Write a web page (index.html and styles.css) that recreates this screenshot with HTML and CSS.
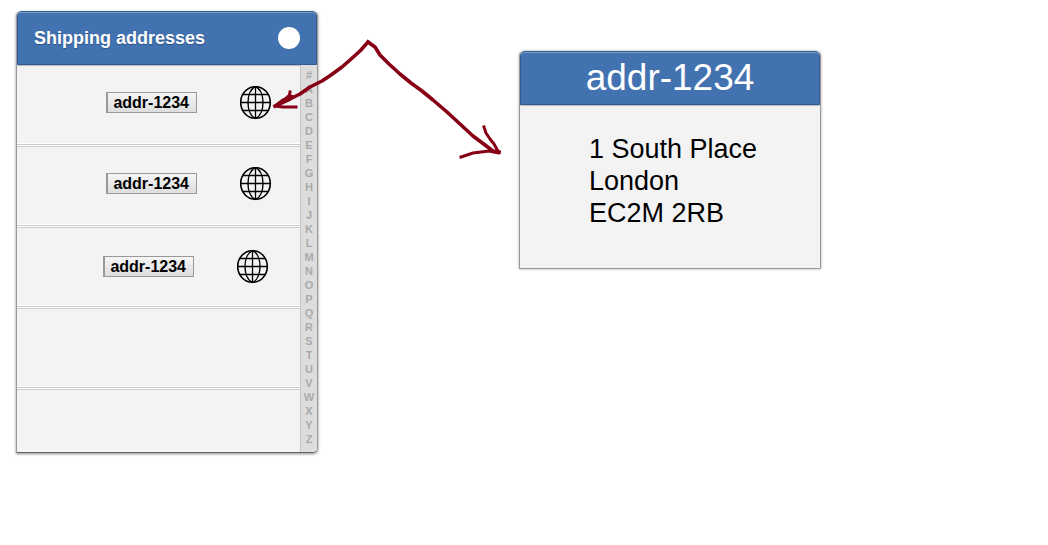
FILE: index.html
```html
<!DOCTYPE html>
<html lang="en">
<head>
<meta charset="utf-8">
<meta name="viewport" content="width=device-width, initial-scale=1">
<title>Shipping addresses</title>
<link rel="stylesheet" href="styles.css">
</head>
<body>
<svg class="defs" width="0" height="0" aria-hidden="true">
  <symbol id="globe" viewBox="0 0 32 34">
    <g fill="none" stroke="#000">
      <ellipse cx="15.5" cy="16.5" rx="14.8" ry="15.8" stroke-width="1.6"/>
      <path d="M15.5 .5C5.500 5 5.500 28 15.500 32.500M15.500 .5C25.500 5 25.500 28 15.500 32.500" stroke-width="1.400"/>
      <path d="M15.500 0V33M0 16.500H31M3 8.500H28M3 24.500H28" stroke-width="1.300"/>
    </g>
  </symbol>
</svg>
<main class="board">
  <section class="panel panel-list">
    <header class="panel-header">
      <h1 class="panel-title">Shipping addresses</h1>
      <button class="round-button" type="button" aria-label="Options"></button>
    </header>
    <div class="list-body">
      <ul class="rows">
        <li class="row"><button class="tag" type="button">addr-1234</button><button class="globe-button" type="button" aria-label="Show address"><svg class="globe"><use href="#globe"/></svg></button></li>
        <li class="row"><button class="tag" type="button">addr-1234</button><button class="globe-button" type="button" aria-label="Show address"><svg class="globe"><use href="#globe"/></svg></button></li>
        <li class="row row-inset"><button class="tag" type="button">addr-1234</button><button class="globe-button" type="button" aria-label="Show address"><svg class="globe"><use href="#globe"/></svg></button></li>
        <li class="row"></li>
        <li class="row row-last"></li>
      </ul>
      <nav class="index" aria-label="Alphabet">
        <a href="#">#</a><a href="#a">A</a><a href="#b">B</a><a href="#c">C</a><a href="#d">D</a><a href="#e">E</a><a href="#f">F</a><a href="#g">G</a><a href="#h">H</a><a href="#i">I</a><a href="#j">J</a><a href="#k">K</a><a href="#l">L</a><a href="#m">M</a><a href="#n">N</a><a href="#o">O</a><a href="#p">P</a><a href="#q">Q</a><a href="#r">R</a><a href="#s">S</a><a href="#t">T</a><a href="#u">U</a><a href="#v">V</a><a href="#w">W</a><a href="#x">X</a><a href="#y">Y</a><a href="#z">Z</a>
      </nav>
    </div>
  </section>
  <section class="panel panel-detail">
    <header class="panel-header panel-header-center">
      <h2 class="detail-title">addr-1234</h2>
    </header>
    <address class="address">1 South Place<br>London<br>EC2M 2RB</address>
  </section>
  <svg class="arrows" width="240" height="130" viewBox="265 35 240 130" aria-hidden="true">
    <g fill="none" stroke="#880015" stroke-width="3.6" stroke-linejoin="round" stroke-linecap="square">
      <path d="M368 42L360 51L350 60L342 67L331 75L322 81L310 87L300 94L290 99L275 106"/>
      <path d="M290 92L289 98L283 100L275 106L283 107L296 107" stroke-width="3"/>
      <path d="M281 102L289 95L295 97Z" fill="#880015" stroke-width="2"/>
      <path d="M368 42L375 47L380 55L389 64L400 74L411 83L422 91L433 100L447 112L460 124L473 136L485 145L493 151L499 152"/>
      <path d="M484 127L486 133L490 139L494 144L499 153L489 151L473 153L461 157" stroke-width="3"/>
    </g>
  </svg>
</main>
</body>
</html>
```
FILE: styles.css
```css
* {
  box-sizing: border-box;
}

body {
  margin: 0;
  background: #fff;
  font-family: "Liberation Sans", Arial, sans-serif;
}

.defs {
  position: absolute;
}

.board {
  position: relative;
  display: flex;
  align-items: flex-start;
  gap: 201px;
  padding: 11px 16px;
}

.panel {
  flex: 0 1 302px;
  background: #f3f3f3;
  border: solid #999;
  border-width: 0 1px 1px;
}

.panel-list {
  border-bottom-color: #666;
  border-radius: 5px 5px 5px 0;
  box-shadow: 0 1px 3px #888;
}

.panel-detail {
  margin-top: 40px;
  border-radius: 5px 5px 0 0;
  box-shadow: 0 0 3px #aaa;
}

.panel-header {
  display: flex;
  align-items: center;
  justify-content: space-between;
  height: 54px;
  padding: 0 16px;
  background: #4273b0;
  border: 1px solid #34598f;
  border-radius: 5px 5px 0 0;
  box-shadow: inset 0 1px 0 #7ba0cc, 0 1px 1px #bbb;
  color: #fff;
}

.panel-header-center {
  justify-content: center;
}

.panel-title {
  margin: 0;
  font-size: 18px;
  line-height: 24px;
  text-shadow: 0 1px 1px #2d5487;
}

.detail-title {
  margin: 0;
  font-size: 37px;
  font-weight: 400;
  line-height: 44px;
}

.round-button {
  width: 22px;
  height: 22px;
  padding: 0;
  border: 0;
  border-radius: 50%;
  background: #fff;
}

.list-body {
  display: flex;
}

.rows {
  flex: 1;
  display: flex;
  flex-direction: column;
  margin: 0;
  padding: 1px 0 0;
  list-style: none;
}

.row {
  display: flex;
  justify-content: flex-end;
  align-items: flex-start;
  gap: 43px;
  height: 81px;
  padding: 20px 28px 0 0;
  border-bottom: 1px solid #ccc;
  box-shadow: inset 0 -1px 0 #fff, inset 0 -2px 0 #ccc, inset 0 -3px 0 #fff;
}

.row-inset {
  padding: 22px 31px 0 0;
}

.row-last {
  flex: 1;
  height: auto;
  border: 0;
  box-shadow: none;
}

.tag {
  height: 21px;
  margin-top: 6px;
  padding: 0 7px 0 5px;
  border: 1px solid #999;
  border-left-width: 2px;
  background: linear-gradient(#f5f5f5, #ddd);
  color: #000;
  font: bold 16px/17px "Liberation Sans", Arial, sans-serif;
}

.globe-button {
  padding: 0;
  border: 0;
  background: none;
}

.globe {
  display: block;
  width: 32px;
  height: 34px;
}

.index {
  display: flex;
  flex-direction: column;
  width: 17px;
  padding: 3px 0 6px;
  border-left: 1px solid #c4c4c4;
  background: #ddd;
  border-radius: 0 0 5px 0;
  font-size: 11px;
  font-weight: 700;
  line-height: 14px;
  text-align: center;
}

.index a {
  color: #aaa;
  text-decoration: none;
}

.address {
  padding: 28px 16px 39px 69px;
  color: #000;
  font-size: 27px;
  font-style: normal;
  line-height: 32px;
}

.arrows {
  position: absolute;
  left: 265px;
  top: 35px;
  pointer-events: none;
}
```
